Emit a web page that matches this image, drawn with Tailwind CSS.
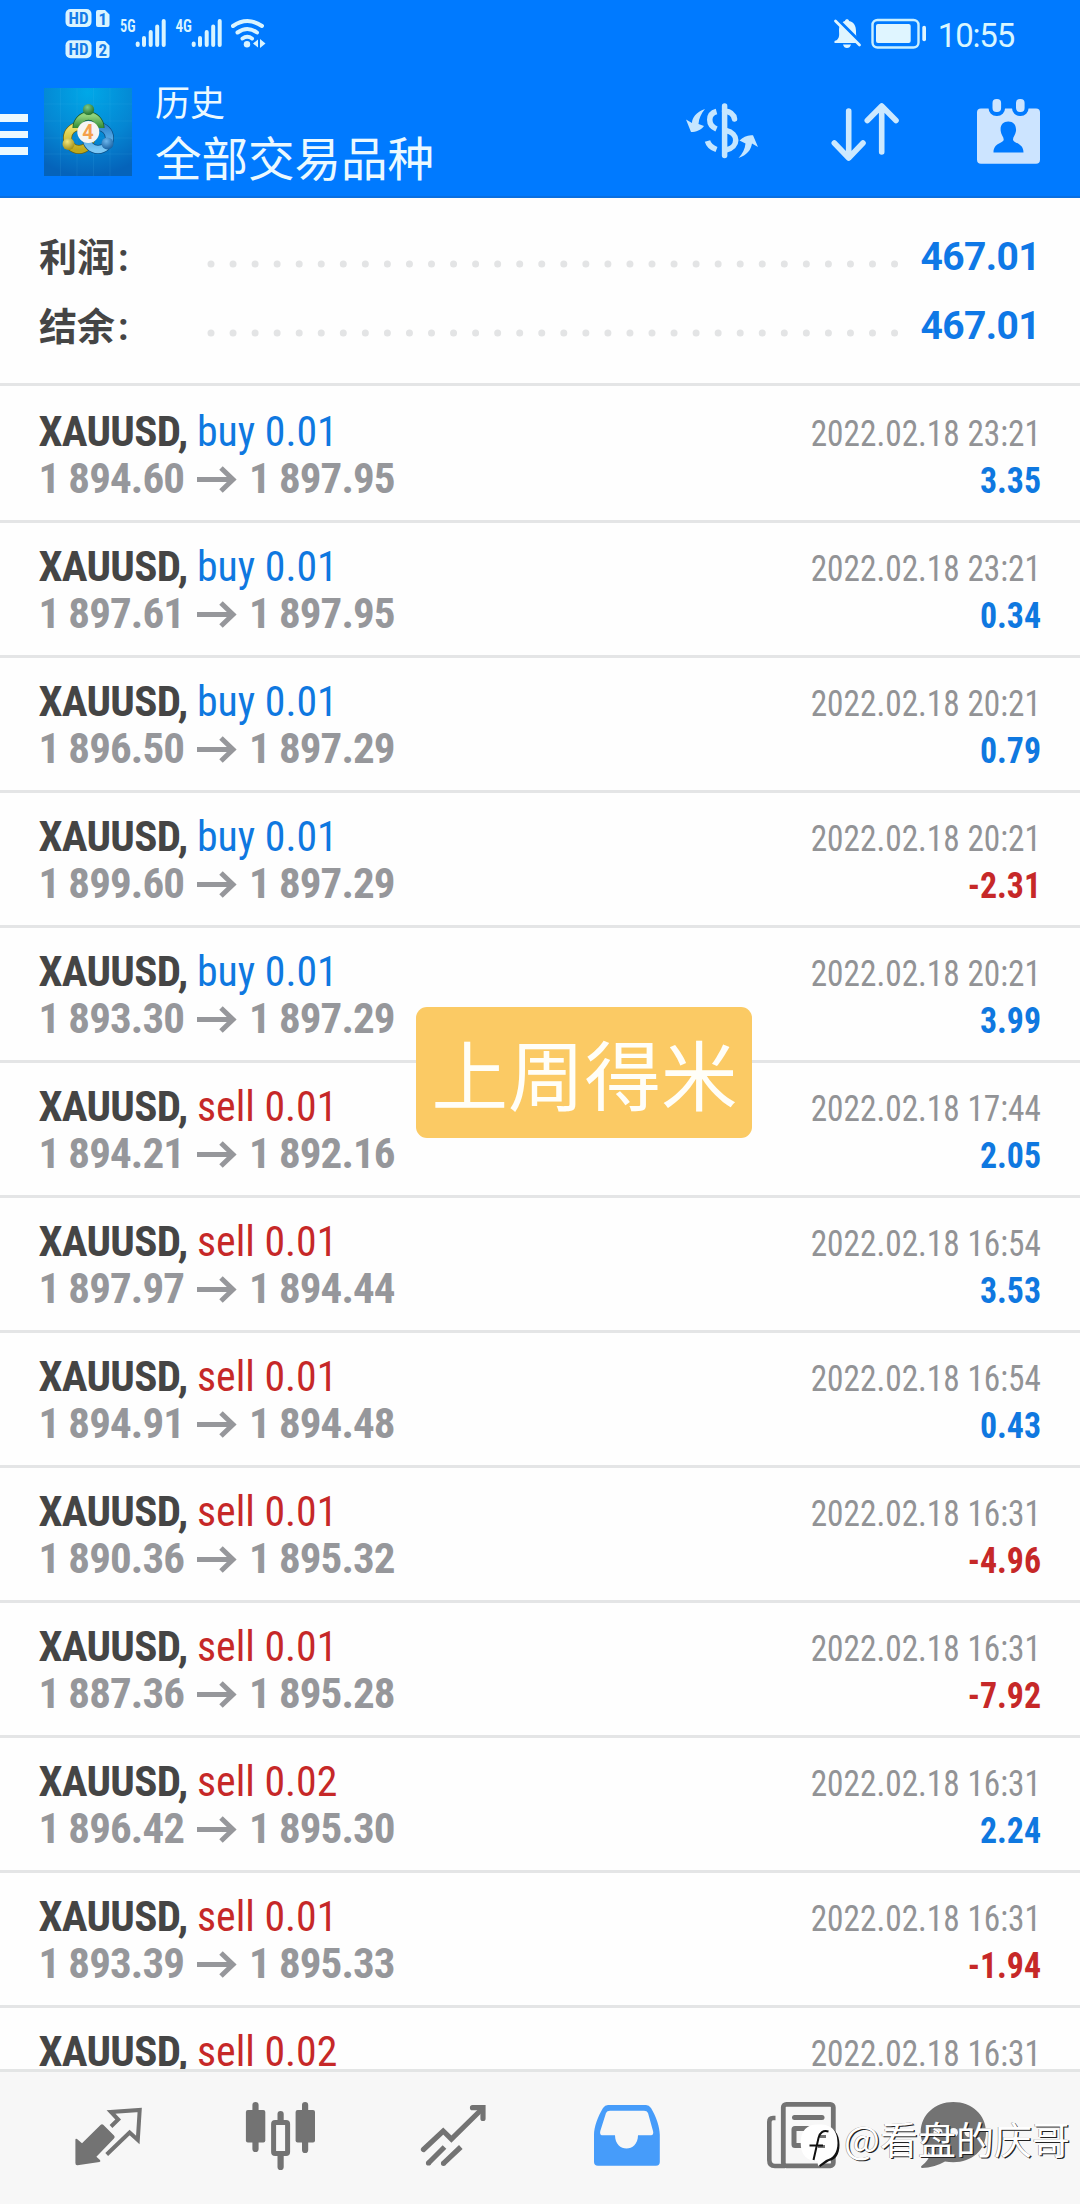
<!DOCTYPE html>
<html lang="zh-CN">
<head>
<meta charset="utf-8">
<title>历史</title>
<script src="https://cdn.jsdelivr.net/npm/@tailwindcss/browser@4"></script>
</head>
<body class="relative flex h-[2204px] w-[1080px] flex-col overflow-hidden bg-[#fefefe] font-['Roboto','Noto_Sans_CJK_SC',sans-serif]">

<header class="flex h-[198px] shrink-0 flex-col border-b-2 border-[#0a6fe0] bg-[#007aff] text-[#ebf9ff]">
  <!-- status bar -->
  <div class="flex h-[68px] justify-between">
    <svg class="h-[68px] w-[280px] font-['Roboto_Condensed']" viewBox="0 0 280 68" fill="#d9f4ff">
      <rect x="65.5" y="9" width="26" height="18" rx="5"/>
      <rect x="65.5" y="40.300" width="26" height="18" rx="5"/>
      <path d="M98 10H105L109.500 14.500V25a2 2 0 0 1-2 2H98a2 2 0 0 1-2-2V12a2 2 0 0 1 2-2ZM98 41H105L109.500 45.500V56a2 2 0 0 1-2 2H98a2 2 0 0 1-2-2V43a2 2 0 0 1 2-2Z"/>
      <g fill="#147be8" font-weight="700" font-size="17">
        <text x="68.500" y="24" textLength="20">HD</text><text x="68.500" y="55.300" textLength="20">HD</text>
        <text x="98.500" y="24.500">1</text><text x="98.500" y="55.500">2</text>
      </g>
      <g font-weight="600" font-size="18"><text x="120" y="32" textLength="15.500" lengthAdjust="spacingAndGlyphs">5G</text><text x="175.500" y="32" textLength="16.500" lengthAdjust="spacingAndGlyphs">4G</text></g>
      <g stroke="#d9f4ff" stroke-width="4" stroke-linecap="round" fill="none">
        <path d="M137.700 43.500V45M144 38V45M150.700 32V45M157.200 26.500V45M163.700 21V45"/>
        <path d="M193.700 43.500V45M200 38V45M206.700 32V45M213.200 26.500V45M219.700 21V45"/>
        <path d="M233 26Q247.300 16 262 26M237.500 32.500Q247.300 25.500 257 32.500M242.500 38.500Q247.300 35 252 38.500"/>
      </g>
      <circle cx="247" cy="44.300" r="3.200"/>
      <path d="M253 43.500L258 39.500V47.500ZM260 39L265.500 43.500L260 48Z"/>
    </svg>
    <div class="flex h-[68px] items-center gap-[11px] pr-[66px]">
      <svg class="h-[68px] w-[94px]" viewBox="833 0 94 68" fill="#dff5ff">
        <path d="M837 40C840 37 839 34 839 30C839 24 843 21.500 845 21C845 18.500 849 18.500 849 21C854 22 856 26 856 31C856 35 856 37 858 40V43H834.500V41ZM843 44.500H851Q850 48 847 48Q844 48 843 44.500Z"/>
        <path d="M838 20L862 44" stroke="#007aff" stroke-width="3.500"/>
        <path d="M835.500 21L859.500 45" stroke="#dff5ff" stroke-width="2.800" stroke-linecap="round"/>
        <rect x="872.500" y="20" width="46" height="27.500" rx="5" fill="none" stroke="#c9efff" stroke-width="2.400"/>
        <rect x="876" y="24" width="34.700" height="19" rx="2"/>
        <rect x="922.300" y="25.700" width="3.700" height="15.600" rx="1.800"/>
      </svg>
      <span class="mt-[2px] text-[33px] leading-none tracking-[-1.200px] text-[#d9f6ff]">10:55</span>
    </div>
  </div>

  <!-- title bar -->
  <div class="flex h-[128px] items-start">
    <div class="mt-[46px] flex w-[28px] flex-col gap-[9px]">
      <i class="h-[7.500px] bg-[#ebf9ff]"></i><i class="h-[7.500px] bg-[#ebf9ff]"></i><i class="h-[7.500px] bg-[#ebf9ff]"></i>
    </div>
    <svg class="mt-[20px] ml-[16px] size-[88px]" viewBox="44 88 88 88">
      <defs>
        <radialGradient id="bg" cx=".5" cy=".05" r=".95"><stop offset="0" stop-color="#00a8e8"/><stop offset=".6" stop-color="#0585d2"/><stop offset="1" stop-color="#0563ba"/></radialGradient>
        <linearGradient id="gr" x2="0" y2="1"><stop offset="0" stop-color="#8fd27c"/><stop offset="1" stop-color="#2f8a35"/></linearGradient>
        <linearGradient id="ye" x2="0" y2="1"><stop offset="0" stop-color="#efe36a"/><stop offset="1" stop-color="#bfa91c"/></linearGradient>
        <linearGradient id="bl" x2="0" y2="1"><stop offset="0" stop-color="#2f86cf"/><stop offset="1" stop-color="#7cc8f5"/></linearGradient>
        <radialGradient id="gb" cx=".4" cy=".3" r=".8"><stop offset="0" stop-color="#7cc98a"/><stop offset="1" stop-color="#17671f"/></radialGradient>
        <radialGradient id="yb" cx=".4" cy=".3" r=".8"><stop offset="0" stop-color="#f3e77c"/><stop offset="1" stop-color="#94820c"/></radialGradient>
        <radialGradient id="bb" cx=".4" cy=".3" r=".8"><stop offset="0" stop-color="#6db6ec"/><stop offset="1" stop-color="#0f5798"/></radialGradient>
      </defs>
      <path d="M44 88h88v88H44z" fill="url(#bg)"/>
      <path d="M60.500 88v88M77 88v88M93.500 88v88M110 88v88M44 104h88M44 121h88M44 138h88M44 154h88" stroke="#4fc0f0" stroke-opacity=".12" fill="none"/>
      <g fill="none">
        <circle cx="79" cy="138" r="11.500" stroke="#6d6410" stroke-width="9"/><circle cx="79" cy="138" r="11.500" stroke="url(#ye)" stroke-width="7.500"/>
        <circle cx="98" cy="138" r="11.500" stroke="#0b4f86" stroke-width="9"/><circle cx="98" cy="138" r="11.500" stroke="url(#bl)" stroke-width="7.500"/>
        <path d="M77 128A11.500 12 0 1 1 100 128" stroke="#1c5a25" stroke-width="9"/><path d="M77 128A11.500 12 0 1 1 100 128" stroke="url(#gr)" stroke-width="7.500"/>
      </g>
      <circle cx="88.500" cy="109.500" r="5.600" fill="url(#gb)"/>
      <circle cx="68.500" cy="144" r="6" fill="url(#yb)"/>
      <circle cx="107.500" cy="143.500" r="6" fill="url(#bb)"/>
      <circle cx="88.300" cy="132" r="11" fill="#f6f4f2"/>
      <text x="88" y="139" text-anchor="middle" font-size="20" font-weight="700" fill="#f4a04c">4</text>
    </svg>
    <div class="ml-[23px] flex flex-col">
      <span class="mt-[16px] text-[35px] leading-[42px]">历史</span>
      <span class="mt-[5px] text-[46.500px] leading-[58px]">全部交易品种</span>
    </div>
    <div class="mt-[30px] ml-auto flex items-center pr-[39px]">
      <svg class="h-[70px] w-[72px]" viewBox="686 98 72 70" fill="none" stroke="#c5e6ff" stroke-width="5.500">
        <path d="M724.600 106V155.500" stroke-linecap="round"/>
        <path d="M716.500 111.500C707.500 114 707.500 125 716.500 129M716.500 149.500C711 147.500 708.500 145 707.500 141"/>
        <path d="M724.600 111Q733.500 112 734.500 119" stroke-linecap="round"/>
        <path d="M726 130.500C739 133 739 147.500 726 150"/>
        <path d="M705 109C696 112 692 118 692 123L686 119.500L691 132C696 132 701 130 704 126L698.500 124C699 118 701 114 705 109Z" fill="#c5e6ff" stroke="none"/>
        <path d="M738.500 158C747 155 751 150 752 143.500L758 147L753 135.300C748 134.500 743 137 739.500 140.500L745.500 143.500C745 149 742.500 154 738.500 158Z" fill="#c5e6ff" stroke="none"/>
      </svg>
      <svg class="ml-[73px] h-[70px] w-[68px]" viewBox="831 98 68 70" fill="none" stroke="#cce9ff" stroke-width="5.600" stroke-linecap="round" stroke-linejoin="round">
        <path d="M848.700 111V157.500M834.300 143L848.700 158L863 143M881.700 152V106.500M867.300 120.500L881.700 106L896 120.500"/>
      </svg>
      <svg class="ml-[77px] h-[70px] w-[65px]" viewBox="976 98 65 70">
        <rect x="977" y="108.500" width="63" height="55.200" rx="4" fill="#cce4ff"/>
        <g fill="#cce4ff" stroke="#007aff" stroke-width="4"><rect x="990.500" y="97" width="12.600" height="17" rx="6"/><rect x="1014" y="97" width="12.600" height="17" rx="6"/></g>
        <path d="M1008.300 121.500C1013.500 121.500 1016.500 125 1016 131C1015.500 134.500 1013 137 1013 139.500C1013 143.500 1023.500 142.500 1023.500 152.500H993.500C993.500 142.500 1003.700 143.500 1003.700 139.500C1003.700 137 1001 134.500 1000.700 131C1000 125 1003 121.500 1008.300 121.500Z" fill="#007aff"/>
      </svg>
    </div>
  </div>
</header>

<!-- totals -->
<section class="flex h-[188px] shrink-0 flex-col border-b-[3px] border-[#e4e5e6] px-[39px] pt-[25px]">
  <div class="flex h-[69px] items-center">
    <span class="w-[168px] shrink-0 pt-[1px] text-[38px] font-bold text-[#454545]">利润<span class="ml-[3px]">:</span></span>
    <svg class="mt-[12px] h-[10px] w-[692px] shrink-0" viewBox="207 0 692 10"><path d="M211 5H895.500" stroke="#e3e4e5" stroke-width="7" stroke-linecap="round" stroke-dasharray="0 22.050"/></svg>
    <span class="mr-[1px] ml-auto text-[39px] font-bold tracking-[-0.600px] text-[#0f78e6]">467.01</span>
  </div>
  <div class="flex h-[69px] items-center">
    <span class="w-[168px] shrink-0 pt-[1px] text-[38px] font-bold text-[#454545]">结余<span class="ml-[3px]">:</span></span>
    <svg class="mt-[12px] h-[10px] w-[692px] shrink-0" viewBox="207 0 692 10"><path d="M211 5H895.500" stroke="#e3e4e5" stroke-width="7" stroke-linecap="round" stroke-dasharray="0 22.050"/></svg>
    <span class="mr-[1px] ml-auto text-[39px] font-bold tracking-[-0.600px] text-[#0f78e6]">467.01</span>
  </div>
</section>

<!-- deals -->
<main id="deals" class="h-[1683px] shrink-0 overflow-hidden pt-[2px] font-['Roboto_Condensed','Roboto',sans-serif]"></main>

<nav class="flex h-[135px] shrink-0 items-start border-t-[3px] border-[#e3e5e5] bg-[#f7f7f7] pt-[26px] pl-[73px] text-[#737373]">
  <svg class="h-[74px] w-[70px]" viewBox="73 2098 70 74" fill="currentColor">
    <path d="M75.400 2140Q75.400 2138 77 2139L82 2143.300L100.500 2125Q102 2123.500 103.500 2125L114 2135.500Q115.500 2137 114 2138.500L96.400 2156.700L100 2160Q101 2161.500 99.500 2162L77.500 2165.300Q75.400 2165.500 75.400 2163Z"/>
    <path d="M106.700 2154.500L129.600 2132.500L137.800 2140L139.700 2110L111 2112L118.200 2119.500L111 2126.500" fill="none" stroke="currentColor" stroke-width="4"/>
  </svg>
  <svg class="ml-[101px] h-[74px] w-[72px]" viewBox="244 2098 72 74">
    <g stroke="currentColor" stroke-width="6.200" stroke-linecap="round"><path d="M255.500 2105V2149M280.600 2114V2125M280.600 2152V2167M305.100 2105V2150"/></g>
    <g fill="currentColor"><rect x="245.900" y="2110" width="19.400" height="32.500" rx="2"/><rect x="295.600" y="2110" width="19.400" height="32.500" rx="2"/></g>
    <rect x="273.600" y="2122.500" width="14" height="31" rx="1.500" fill="#f7f7f7" stroke="currentColor" stroke-width="5"/>
  </svg>
  <svg class="ml-[104px] h-[74px] w-[68px]" viewBox="420 2098 68 74" fill="none" stroke="currentColor" stroke-width="5.200">
    <path d="M423.500 2149.500L443.200 2131L451.400 2139L482 2109" stroke-linecap="round"/>
    <path d="M472.500 2107.700H483V2118.500" stroke-linecap="round"/>
    <path d="M444.500 2147L428.500 2163M460.800 2147L443.500 2163.300"/>
    <path d="M428.500 2163h.01M443.500 2163.300h.01" stroke-linecap="round"/>
  </svg>
  <svg class="ml-[104px] h-[74px] w-[70px]" viewBox="592 2098 70 74">
    <path fill="#469cfa" fill-rule="evenodd" d="M608 2105H646Q649 2105 651 2108C656 2116 659.800 2127 659.800 2135V2162Q659.800 2165.700 656 2165.700H598Q594 2165.700 594 2162V2135C594 2127 598 2116 603 2108Q605 2105 608 2105ZM610 2110.700Q607 2110.700 606 2113L600.300 2131Q599.500 2135 602 2135.300H615C615 2153 638 2153 638 2135.300H651Q654 2135 653 2131L648 2113Q647 2110.700 644 2110.700Z"/>
  </svg>
  <svg class="ml-[103px] h-[74px] w-[72px]" viewBox="765 2098 72 74" fill="none" stroke="currentColor">
    <rect x="783.300" y="2104.300" width="50" height="61.500" rx="3" stroke-width="4.800"/>
    <path d="M775.500 2118H773Q769.300 2118 769.300 2122V2160Q769.300 2166 775 2166H785" stroke-width="4.600"/>
    <path d="M794.500 2117.500H822" stroke-width="5" stroke-linecap="round"/>
    <rect x="794" y="2128.500" width="15" height="17" rx="1" stroke-width="5"/>
  </svg>
  <svg class="ml-[82px] h-[74px] w-[70px]" viewBox="919 2098 70 74">
    <path fill="currentColor" d="M953.300 2102C972 2102 986 2115 986 2132.300C986 2150 972 2162.300 953.300 2162.300Q949 2162.300 945 2161.600Q934 2168 922 2168Q920 2167 922 2165.500Q929 2160 930 2154C924 2148 920.700 2141 920.700 2132.300C920.700 2115 935 2102 953.300 2102Z"/>
    <g fill="#f7f7f7"><circle cx="938" cy="2132.500" r="4.500"/><circle cx="953.500" cy="2132.500" r="4.500"/><circle cx="969" cy="2132.500" r="4.500"/></g>
  </svg>
</nav>

<!-- caption sticker over the list -->
<div class="absolute top-[1007px] left-[416px] flex h-[131px] w-[336px] items-center justify-center rounded-[11px] bg-[#fbca64] text-[76.500px] leading-none text-[#fffef8]"><span class="mt-[13px] ml-[1px]">上周得米</span></div>

<!-- author watermark -->
<div class="absolute top-[2112px] left-[799px] flex h-[60px] items-center text-white">
  <svg class="h-[60px] w-[43px]" viewBox="799 2112 43 60">
    <path d="M820 2126C834 2126 839.500 2133 839.500 2145C839.500 2155 835 2160 829 2161L820 2167L818 2162" fill="#111"/>
    <path d="M818 2124.500C833 2124 837.500 2132 837.500 2143C837.500 2153 833 2158 826 2160L818 2166L817.500 2161C806 2161 800.700 2154 800.700 2143C800.700 2130 807 2124.500 818 2124.500Z" fill="#fff"/>
    <path d="M818 2146.500H825M819.500 2136.500H826" fill="none" stroke="#737373" stroke-width="3"/>
    <path d="M828.500 2131.500Q820.500 2129.500 818.500 2138L813.500 2160M809.500 2145.500H823" fill="none" stroke="#111" stroke-width="2"/>
  </svg>
  <span class="mb-[8px] ml-[2px] text-[38px] leading-none whitespace-nowrap font-['Noto_Sans_CJK_SC',sans-serif] [text-shadow:1.2px_1.2px_0_#222,-0.5px_-0.5px_0_#888]">@看盘的庆哥</span>
</div>

<script>
const deals = [
  ['buy 0.01', '1 894.60', '1 897.95', '23:21', '3.35'],
  ['buy 0.01', '1 897.61', '1 897.95', '23:21', '0.34'],
  ['buy 0.01', '1 896.50', '1 897.29', '20:21', '0.79'],
  ['buy 0.01', '1 899.60', '1 897.29', '20:21', '-2.31'],
  ['buy 0.01', '1 893.30', '1 897.29', '20:21', '3.99'],
  ['sell 0.01', '1 894.21', '1 892.16', '17:44', '2.05'],
  ['sell 0.01', '1 897.97', '1 894.44', '16:54', '3.53'],
  ['sell 0.01', '1 894.91', '1 894.48', '16:54', '0.43'],
  ['sell 0.01', '1 890.36', '1 895.32', '16:31', '-4.96'],
  ['sell 0.01', '1 887.36', '1 895.28', '16:31', '-7.92'],
  ['sell 0.02', '1 896.42', '1 895.30', '16:31', '2.24'],
  ['sell 0.01', '1 893.39', '1 895.33', '16:31', '-1.94'],
  ['sell 0.02'],
];
const blue = 'text-[#0f78e0]', red = 'text-[#c62828]';
document.getElementById('deals').innerHTML = deals.map(([side, from, to, time = '16:31', profit]) => `
  <article class="h-[135px] border-b-[3px] border-[#e4e5e6] pt-[20px] pr-[39px] pl-[38.500px]">
    <div class="flex h-[47px] items-baseline justify-between leading-[47px]">
      <div class="flex gap-[9px] text-[43px]"><b class="font-bold tracking-[-0.700px] text-[#454545]">XAUUSD,</b><span class="origin-left scale-x-[0.972] ${side[0] === 'b' ? blue : red}">${side}</span></div>
      <span class="origin-right scale-x-[0.925] text-[36px] text-[#929396]">2022.02.18 ${time}</span>
    </div>
    ${from ? `<div class="flex h-[47px] items-baseline justify-between leading-[47px]">
      <div class="flex items-baseline text-[43px] font-bold tracking-[-0.900px] text-[#96979b]"><span>${from}</span>
        <svg class="mr-[12px] ml-[13px] h-[27px] w-[40px]" viewBox="0 0 40 27" fill="none" stroke="currentColor" stroke-width="5"><path d="M0 13.500H36M24 2L36 13.500L24 25"/></svg>
        <span>${to}</span></div>
      <span class="origin-right scale-x-[0.94] text-[36px] font-bold ${profit[0] === '-' ? red : blue}">${profit}</span>
    </div>` : ''}
  </article>`).join('');
</script>
</body>
</html>
